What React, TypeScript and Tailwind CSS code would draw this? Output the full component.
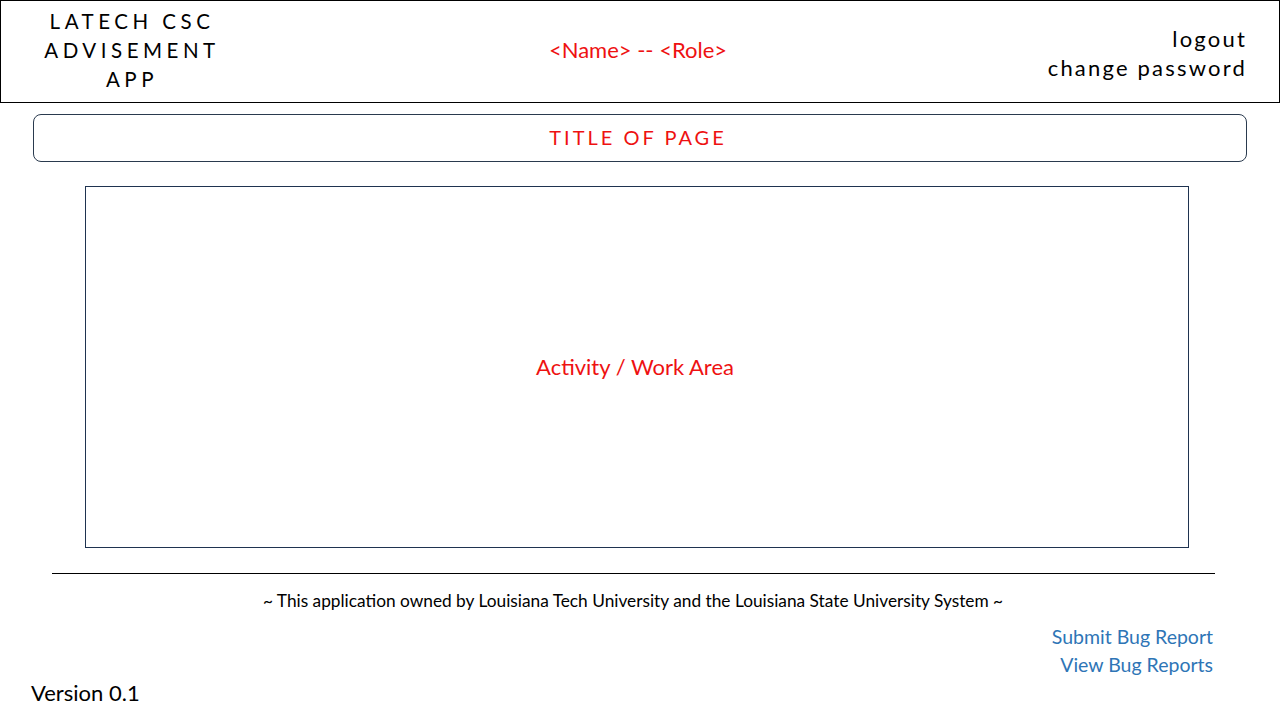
export default function App() {
  return (
    <div className="w-[1280px] h-[720px] bg-white flex flex-col font-['Lato','Open_Sans',sans-serif] overflow-hidden">
      {/* header */}
      <header className="h-[103px] border border-black grid grid-cols-[256px_1fr_256px] items-center">
        <div className="text-center text-[20.5px] leading-[29px] tracking-[0.22em] text-black pl-[6px] -mt-[3px]">
          <div>LATECH CSC</div>
          <div>ADVISEMENT</div>
          <div>APP</div>
        </div>
        <div className="text-center text-[22px] text-[#ee1111] -mt-[4px] pr-[4px]">&lt;Name&gt; -- &lt;Role&gt;</div>
        <div className="text-right pr-[32px] text-[22px] leading-[29px] tracking-[0.1em] text-black mt-[2px]">
          <div>logout</div>
          <div>change password</div>
        </div>
      </header>

      {/* title */}
      <div className="mt-[11px] mx-[33px] h-[48px] border border-[#2a3a4e] rounded-[8px] flex items-center justify-center">
        <span className="text-[20px] tracking-[0.15em] text-[#ee1111] -mt-[2px] pr-[4px]">TITLE OF PAGE</span>
      </div>

      {/* work area */}
      <div className="mt-[24px] ml-[85px] w-[1104px] h-[362px] border border-[#1f3350] flex items-center justify-center">
        <span className="text-[22px] text-[#ee1111] -mt-[2px] pr-[4px]">Activity / Work Area</span>
      </div>

      {/* footer */}
      <div className="mt-[25px] ml-[52px] w-[1163px] h-px bg-black" />
      <div className="mt-[14px] text-center text-[17.3px] text-black pr-[14px]">
        ~ This application owned by Louisiana Tech University and the Louisiana State University System ~
      </div>
      <div className="mt-[9px] flex justify-between items-end pr-[67px] pl-[31px]">
        <div className="text-[22px] text-black self-end translate-y-[30px]">Version 0.1</div>
        <div className="text-right text-[19.5px] leading-[28px] text-[#2e75b6]">
          <div>Submit Bug Report</div>
          <div>View Bug Reports</div>
        </div>
      </div>
    </div>
  );
}
